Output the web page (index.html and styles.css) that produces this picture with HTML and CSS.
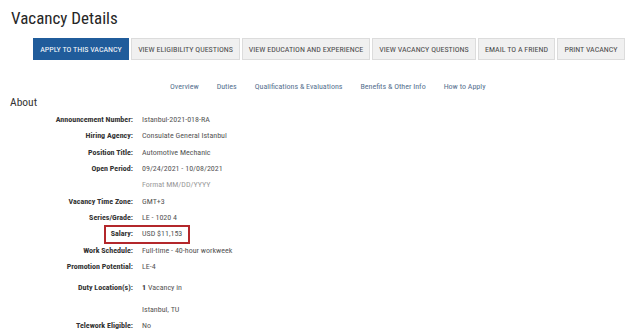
FILE: index.html
```html
<!DOCTYPE html>
<html lang="en">
<head>
<meta charset="utf-8">
<title>Vacancy Details</title>
<link rel="stylesheet" href="styles.css">
</head>
<body>
<div class="page">
  <h1 class="title">Vacancy Details</h1>
  <div class="actions">
    <a class="btn btn-primary b1">APPLY TO THIS VACANCY</a>
    <a class="btn b2">VIEW ELIGIBILITY QUESTIONS</a>
    <a class="btn b3">VIEW EDUCATION AND EXPERIENCE</a>
    <a class="btn b4">VIEW VACANCY QUESTIONS</a>
    <a class="btn b5">EMAIL TO A FRIEND</a>
    <a class="btn b6">PRINT VACANCY</a>
  </div>
  <nav class="tabs">
    <a>Overview</a>
    <a>Duties</a>
    <a>Qualifications &amp; Evaluations</a>
    <a>Benefits &amp; Other Info</a>
    <a>How to Apply</a>
  </nav>
  <h2 class="section">About</h2>
  <div class="details">
    <div class="row"><span class="label">Announcement Number:</span><span class="value">Istanbul-2021-018-RA</span></div>
    <div class="row"><span class="label">Hiring Agency:</span><span class="value">Consulate General Istanbul</span></div>
    <div class="row"><span class="label">Position Title:</span><span class="value">Automotive Mechanic</span></div>
    <div class="row"><span class="label">Open Period:</span><span class="value">09/24/2021 - 10/08/2021</span></div>
    <div class="row"><span class="label"></span><span class="value muted">Format MM/DD/YYYY</span></div>
    <div class="row"><span class="label">Vacancy Time Zone:</span><span class="value">GMT+3</span></div>
    <div class="row"><span class="label">Series/Grade:</span><span class="value">LE - 1020 4</span></div>
    <div class="row salary"><span class="label">Salary:</span><span class="value">USD $11,153</span><span class="highlight"></span></div>
    <div class="row"><span class="label">Work Schedule:</span><span class="value">Full-time - 40-hour workweek</span></div>
    <div class="row"><span class="label">Promotion Potential:</span><span class="value">LE-4</span></div>
    <div class="row duty"><span class="label">Duty Location(s):</span><span class="value"><span class="line"><b>1</b> Vacancy in</span><span class="line loc">Istanbul, TU</span></span></div>
    <div class="row"><span class="label">Telework Eligible:</span><span class="value">No</span></div>
  </div>
</div>
</body>
</html>
```
FILE: styles.css
```css
html, body {
  margin: 0;
  padding: 0;
  background: #ffffff;
}
body {
  font-family: "Roboto Condensed", "Liberation Sans Narrow", "DejaVu Sans Condensed", Roboto, sans-serif;
  color: #333;
  width: 640px;
  height: 334px;
  overflow: hidden;
}
.title {
  margin: 0;
  padding: 7px 0 0 11px;
  font-weight: 400;
  font-size: 17px;
  line-height: 23px;
  color: #262626;
}
.actions {
  display: flex;
  gap: 2px;
  margin: 8px 0 0 33px;
}
.btn {
  display: flex;
  align-items: center;
  justify-content: center;
  height: 22px;
  box-sizing: border-box;
  border: 1px solid #dcdcdc;
  background: #f0f0f0;
  color: #4a4a4a;
  font-size: 8px;
  white-space: nowrap;
}
.btn-primary {
  background: #205c9b;
  border-color: #205c9b;
  color: #fff;
}
.b1 { width: 96px; }
.b2 { width: 109px; }
.b3 { width: 128px; }
.b4 { width: 104px; }
.b5 { width: 77px; }
.b6 { width: 68px; }
.tabs {
  display: flex;
  gap: 18px;
  margin: 22px 0 0 170px;
  font-size: 8px;
  line-height: 10px;
  color: #56718f;
}
.section {
  margin: 2px 0 0 10px;
  font-weight: 400;
  font-size: 11.5px;
  line-height: 16px;
  color: #333;
}
.details {
  margin-top: 2px;
  font-size: 8px;
}
.row {
  position: relative;
  display: flex;
  align-items: flex-start;
  height: 16.33px;
  line-height: 16.33px;
}
.label {
  width: 133px;
  text-align: right;
  font-weight: 700;
  color: #333;
  flex-shrink: 0;
}
.value {
  margin-left: 9px;
  color: #555;
}
.muted {
  color: #9a9a9a;
}
.highlight {
  position: absolute;
  left: 104px;
  top: -1px;
  width: 86px;
  height: 19px;
  box-sizing: border-box;
  border: 2px solid #b3272b;
}
.duty {
  margin-top: 4.5px;
  height: 38px;
}
.line {
  display: block;
}
.loc {
  margin-top: 6px;
}
.value b {
  color: #333;
}
```
